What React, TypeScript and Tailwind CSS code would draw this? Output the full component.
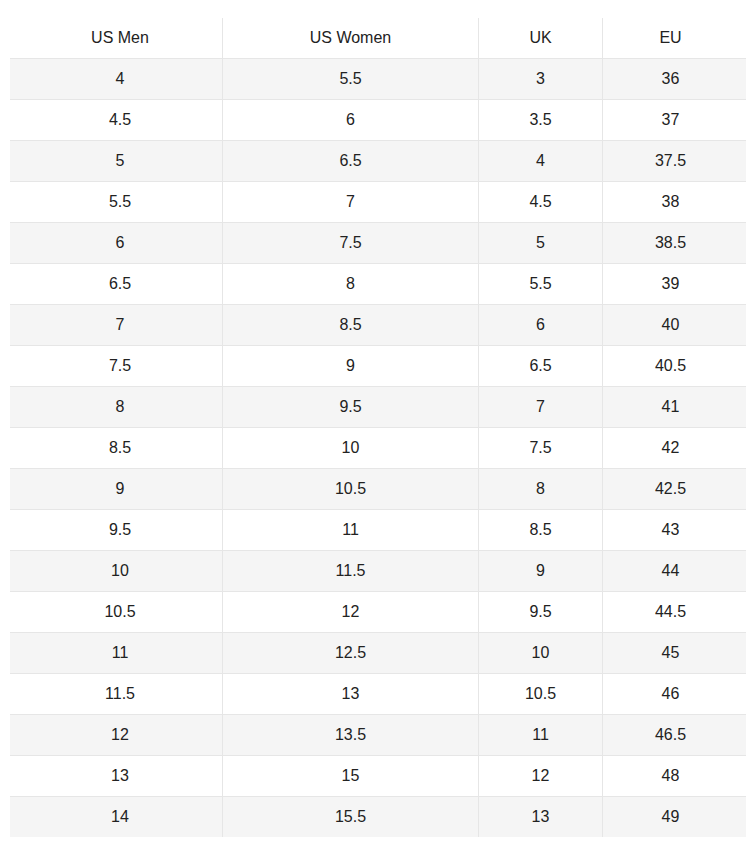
import React from "react";

const rows: [string, string, string, string][] = [
  ["4", "5.5", "3", "36"],
  ["4.5", "6", "3.5", "37"],
  ["5", "6.5", "4", "37.5"],
  ["5.5", "7", "4.5", "38"],
  ["6", "7.5", "5", "38.5"],
  ["6.5", "8", "5.5", "39"],
  ["7", "8.5", "6", "40"],
  ["7.5", "9", "6.5", "40.5"],
  ["8", "9.5", "7", "41"],
  ["8.5", "10", "7.5", "42"],
  ["9", "10.5", "8", "42.5"],
  ["9.5", "11", "8.5", "43"],
  ["10", "11.5", "9", "44"],
  ["10.5", "12", "9.5", "44.5"],
  ["11", "12.5", "10", "45"],
  ["11.5", "13", "10.5", "46"],
  ["12", "13.5", "11", "46.5"],
  ["13", "15", "12", "48"],
  ["14", "15.5", "13", "49"],
];

const headers = ["US Men", "US Women", "UK", "EU"];

const cellClass = (i: number) =>
  i === 0
    ? "flex items-center justify-center pl-[8px]"
    : i === 3
    ? "flex items-center justify-center border-l border-[#e6e6e6] pr-[8px]"
    : "flex items-center justify-center border-l border-[#e6e6e6]";

export default function App() {
  return (
    <div
      className="bg-white min-h-[865px] pt-[18px] pl-[10px] text-[16px] text-[#222]"
      style={{ fontFamily: '"Liberation Sans", Arial, sans-serif' }}
    >
      <div className="w-[736px]">
        <div className="grid grid-cols-[212px_256px_124px_144px] h-[40px]">
          {headers.map((h, i) => (
            <div key={h} className={cellClass(i)}>
              {h}
            </div>
          ))}
        </div>
        {rows.map((r, ri) => (
          <div
            key={ri}
            className={`grid grid-cols-[212px_256px_124px_144px] h-[41px] border-t border-[#e6e6e6] ${
              ri % 2 === 0 ? "bg-[#f5f5f5]" : "bg-white"
            }`}
          >
            {r.map((c, ci) => (
              <div key={ci} className={cellClass(ci)}>
                {c}
              </div>
            ))}
          </div>
        ))}
      </div>
    </div>
  );
}
